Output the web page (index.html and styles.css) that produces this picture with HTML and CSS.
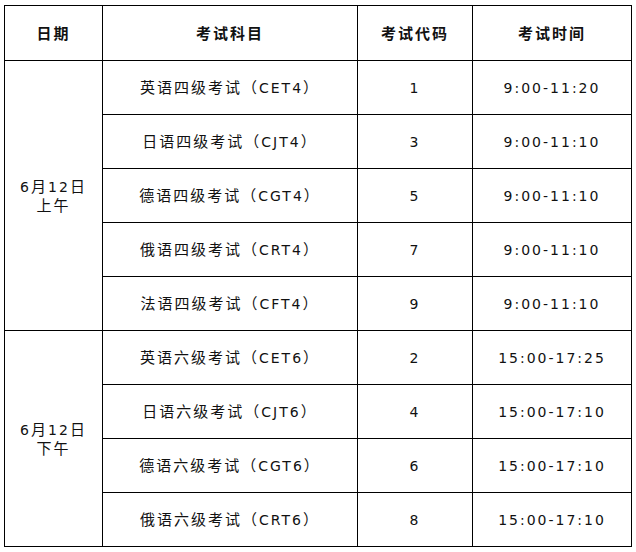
FILE: index.html
```html
<!DOCTYPE html>
<html lang="zh-CN">
<head>
<meta charset="utf-8">
<title>考试安排</title>
<link rel="stylesheet" href="styles.css">
</head>
<body>
<div class="wrap">
<table class="exam">
  <colgroup>
    <col class="c-date">
    <col class="c-subj">
    <col class="c-code">
    <col class="c-time">
  </colgroup>
  <thead>
    <tr class="head"><th>日期</th><th>考试科目</th><th>考试代码</th><th>考试时间</th></tr>
  </thead>
  <tbody>
    <tr><td rowspan="5" class="date"><span class="en">6</span>月<span class="en">12</span>日<br>上午</td><td>英语四级考试（<span class="en">CET4</span>）</td><td class="en">1</td><td class="en">9:00-11:20</td></tr>
    <tr><td>日语四级考试（<span class="en">CJT4</span>）</td><td class="en">3</td><td class="en">9:00-11:10</td></tr>
    <tr><td>德语四级考试（<span class="en">CGT4</span>）</td><td class="en">5</td><td class="en">9:00-11:10</td></tr>
    <tr><td>俄语四级考试（<span class="en">CRT4</span>）</td><td class="en">7</td><td class="en">9:00-11:10</td></tr>
    <tr><td>法语四级考试（<span class="en">CFT4</span>）</td><td class="en">9</td><td class="en">9:00-11:10</td></tr>
    <tr><td rowspan="4" class="date"><span class="en">6</span>月<span class="en">12</span>日<br>下午</td><td>英语六级考试（<span class="en">CET6</span>）</td><td class="en">2</td><td class="en">15:00-17:25</td></tr>
    <tr><td>日语六级考试（<span class="en">CJT6</span>）</td><td class="en">4</td><td class="en">15:00-17:10</td></tr>
    <tr><td>德语六级考试（<span class="en">CGT6</span>）</td><td class="en">6</td><td class="en">15:00-17:10</td></tr>
    <tr><td>俄语六级考试（<span class="en">CRT6</span>）</td><td class="en">8</td><td class="en">15:00-17:10</td></tr>
  </tbody>
</table>
</div>
</body>
</html>
```
FILE: styles.css
```css
html, body {
  margin: 0;
  padding: 0;
  background: #fff;
}
.wrap {
  padding: 5px 0 0 4px;
}
.exam {
  border-collapse: collapse;
  table-layout: fixed;
  width: 627px;
  font-family: "Noto Sans CJK SC", sans-serif;
  font-size: 15px;
  color: #111;
  letter-spacing: 2px;
}
.c-date { width: 98px; }
.c-subj { width: 255px; }
.c-code { width: 115px; }
.c-time { width: 159px; }
.exam th, .exam td {
  border: 1px solid #000;
  text-align: center;
  vertical-align: middle;
  padding: 0;
  line-height: 18px;
}
.exam th {
  font-weight: bold;
}
.exam .en {
  font-family: "DejaVu Sans", sans-serif;
  font-size: 14px;
}
.exam tr.head { height: 55px; }
.exam tbody tr { height: 54px; }
```
